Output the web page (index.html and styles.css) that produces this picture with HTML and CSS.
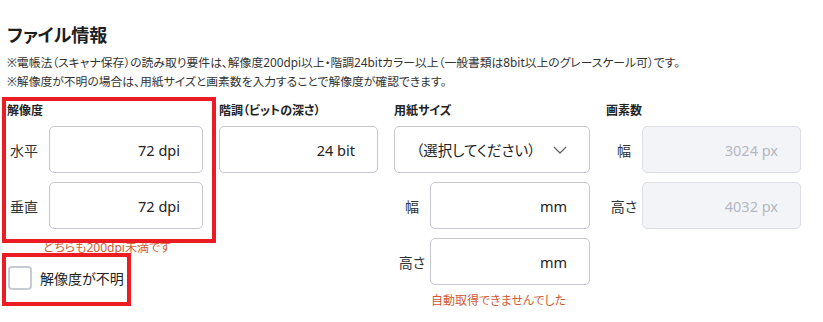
FILE: index.html
```html
<!DOCTYPE html>
<html lang="ja">
<head>
<meta charset="utf-8">
<title>ファイル情報</title>
<link rel="stylesheet" href="styles.css">
</head>
<body>
<div class="page">
  <h1 class="title">ファイル情報</h1>
  <p class="note">※電帳法（スキャナ保存）の読み取り要件は、解像度200dpi以上・階調24bitカラー以上（一般書類は8bit以上のグレースケール可）です。<br>※解像度が不明の場合は、用紙サイズと画素数を入力することで解像度が確認できます。</p>

  <div class="fields">
    <div class="col col-res">
      <div class="group highlight hl-res">
        <div class="label">解像度</div>
        <div class="rows">
          <div class="row"><span class="row-label left">水平</span><div class="input">72 dpi</div></div>
          <div class="row"><span class="row-label left">垂直</span><div class="input">72 dpi</div></div>
        </div>
      </div>
      <div class="error warn-res">どちらも200dpi未満です</div>
      <label class="check highlight hl-check"><span class="box"></span><span class="check-text">解像度が不明</span></label>
    </div>

    <div class="col col-bit">
      <div class="label">階調（ビットの深さ）</div>
      <div class="rows">
        <div class="input">24 bit</div>
      </div>
    </div>

    <div class="col col-paper">
      <div class="label">用紙サイズ</div>
      <div class="rows">
        <div class="select"><span class="select-text">（選択してください）</span>
          <svg class="chev" width="14" height="8" viewBox="0 0 14 8"><polyline points="1,1 7,7 13,1" fill="none" stroke="#666" stroke-width="1.3"/></svg>
        </div>
        <div class="row"><span class="row-label">幅</span><div class="input">mm</div></div>
        <div class="row"><span class="row-label">高さ</span><div class="input">mm</div></div>
      </div>
      <div class="error warn-paper">自動取得できませんでした</div>
    </div>

    <div class="col col-px">
      <div class="label">画素数</div>
      <div class="rows">
        <div class="row"><span class="row-label">幅</span><div class="input disabled">3024 px</div></div>
        <div class="row"><span class="row-label">高さ</span><div class="input disabled">4032 px</div></div>
      </div>
    </div>
  </div>
</div>
</body>
</html>
```

FILE: styles.css
```css
* { box-sizing: border-box; }
html, body { margin: 0; padding: 0; background: #fff; }
body {
  font-family: "Noto Sans", "Noto Sans CJK JP", sans-serif;
  color: #222;
  font-feature-settings: "palt";
}
.page { padding: 0 7px; }
.title {
  margin: 0;
  padding-top: 23px;
  font-size: 18px;
  line-height: 24px;
  font-weight: 700;
  color: #1e1e1e;
}
.note {
  margin: 6px 0 0;
  font-size: 11.8px;
  line-height: 19px;
  color: #333;
}
.fields {
  display: grid;
  grid-template-columns: 196px 159px 196px 195px;
  column-gap: 16px;
  margin-top: 12px;
  align-items: start;
}
.col { display: flex; flex-direction: column; }
.group { position: relative; }
.label {
  font-size: 12px;
  line-height: 16px;
  font-weight: 700;
  color: #222;
  margin-bottom: 7px;
  white-space: nowrap;
}
.rows { display: flex; flex-direction: column; gap: 9px; }
.row { display: flex; align-items: center; }
.row-label {
  width: 36px;
  flex: none;
  text-align: center;
  font-size: 14px;
  color: #333;
}
.row-label.left { width: 42px; text-align: left; padding-left: 3px; }
.input {
  height: 47px;
  border: 1px solid #c5c9cf;
  border-radius: 5px;
  display: flex;
  align-items: center;
  justify-content: flex-end;
  padding-right: 22px;
  font-size: 14.5px;
  color: #222;
  background: #fff;
}
.row .input { flex: 1; }
.input.disabled {
  background: #f3f4f7;
  border-color: #dcdfe4;
  color: #b4b8c0;
}
.select {
  height: 47px;
  border: 1px solid #c5c9cf;
  border-radius: 5px;
  display: flex;
  align-items: center;
  justify-content: space-between;
  padding: 0 22px 0 21px;
  font-size: 14.5px;
  color: #222;
}
.chev { display: block; }
.error {
  font-size: 12px;
  line-height: 16px;
  color: #cf5a33;
}
.warn-res { margin-top: 11px; padding-left: 36px; }
.warn-paper { margin-top: 8px; padding-left: 37px; }
.check {
  display: inline-flex;
  align-items: center;
  gap: 8px;
  margin-top: 10px;
  margin-left: 1px;
  align-self: flex-start;
  position: relative;
}
.box {
  width: 24px;
  height: 24px;
  border: 2px solid #c7cbd1;
  border-radius: 4px;
  background: #fff;
}
.check-text { font-size: 14px; color: #222; }
.highlight::after {
  content: "";
  position: absolute;
  border: 4px solid #ec1c24;
  pointer-events: none;
}
.hl-res::after { top: -6px; left: -5px; right: -13px; bottom: -14px; }
.hl-check::after { top: -13px; left: -6px; right: -7px; bottom: -16px; }
```
